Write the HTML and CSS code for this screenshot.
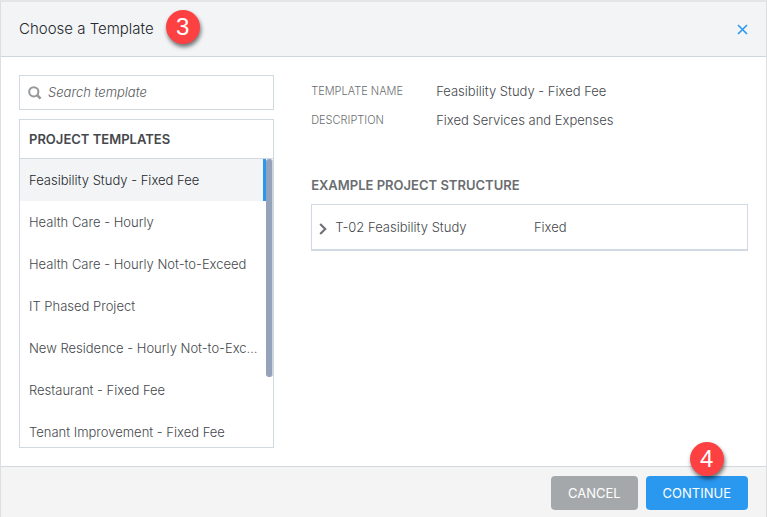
FILE: index.html
```html
<!doctype html>
<html lang="en">
	<head>
		<meta charset="utf-8"/>
		<title>Choose a Template</title>
		<link rel="stylesheet" href="styles.css">
	</head>
	<body>
		<div class="modal">
			<header class="modal-header">
				<h1>Choose a Template</h1>
				<span class="step">3</span>
				<button class="close" type="button" aria-label="Close">
					<svg width="11" height="11" viewBox="0 0 11 11"><path d="M1 1L10 10M10 1L1 10" fill="none" stroke="#2b98f0" stroke-width="1.6"/></svg>
				</button>
			</header>

			<main class="modal-body">
				<!-- left: search + list -->
				<section class="left">
					<label class="search">
						<svg width="14" height="14" viewBox="0 0 14 14"><circle cx="5.8" cy="5.8" r="4.6" fill="none" stroke="#96999c" stroke-width="2"/><path d="M9.2 9.2L12.6 12.6" stroke="#96999c" stroke-width="2.6"/></svg>
						<input type="text" placeholder="Search template" aria-label="Search template">
					</label>
					<div class="templates">
						<h2>PROJECT TEMPLATES</h2>
						<div class="list">
							<ul>
								<li class="active"><a href="#">Feasibility Study - Fixed Fee</a></li>
								<li><a href="#">Health Care - Hourly</a></li>
								<li><a href="#">Health Care - Hourly Not-to-Exceed</a></li>
								<li><a href="#">IT Phased Project</a></li>
								<li><a href="#">New Residence - Hourly Not-to-Exceed</a></li>
								<li><a href="#">Restaurant - Fixed Fee</a></li>
								<li><a href="#">Tenant Improvement - Fixed Fee</a></li>
							</ul>
							<div class="scroll"></div>
						</div>
					</div>
				</section>

				<!-- right: details -->
				<section class="right">
					<dl>
						<dt>TEMPLATE NAME</dt>
						<dd>Feasibility Study - Fixed Fee</dd>
						<dt>DESCRIPTION</dt>
						<dd>Fixed Services and Expenses</dd>
					</dl>
					<h2>EXAMPLE PROJECT STRUCTURE</h2>
					<table>
						<tr>
							<td class="name">
								<button class="expand" type="button" aria-label="Expand">
									<svg width="8" height="12" viewBox="0 0 8 12"><path d="M1.2 1L6.2 6L1.2 11" fill="none" stroke="#6f7276" stroke-width="2.2"/></svg>
								</button>T-02 Feasibility Study
							</td>
							<td>Fixed</td>
						</tr>
					</table>
				</section>
			</main>

			<footer class="modal-footer">
				<button class="btn" type="button">CANCEL</button>
				<div class="continue">
					<button class="btn btn-primary" type="button">CONTINUE</button>
					<span class="step">4</span>
				</div>
			</footer>
		</div>
	</body>
</html>
```

FILE: styles.css
```css
*{box-sizing:border-box;}
html,body{height:100%;margin:0;padding:0;}
body{background:#fff;color:#45484c;font:300 13px/20px Inter,"Liberation Sans",sans-serif;overflow:hidden;}
h1,h2,ul,dl,dd{margin:0;padding:0;}
button,input{font:inherit;}
svg{display:block;}
.modal{display:flex;flex-direction:column;min-height:100%;border:1px solid #dcdee0;border-top:2px solid #e3e5e7;border-bottom:0;}

/* header */
.modal-header{display:flex;align-items:center;height:55px;padding:0 18px;background:#f2f4f6;border-bottom:1px solid #ced7e0;}
.modal-header h1{font-size:15px;font-weight:300;color:#25282c;}
.modal-header .step{margin:0 auto 4px 12px;}
.close{padding:0;border:0;background:none;cursor:pointer;}
.step{width:34px;height:34px;border-radius:50%;background:#fd4142;color:#fff;font:400 24px/34px "Liberation Sans",Arial,sans-serif;text-align:center;box-shadow:1px 3px 4px rgba(0,0,0,.55);}

/* body */
.modal-body{display:flex;flex:1;gap:37px;padding:18px;}
.left{flex:0 0 35%;min-width:0;}
.search{display:flex;align-items:center;gap:6px;height:35px;padding:0 8px;border:1px solid #d0d9e0;}
.search input{flex:1;min-width:0;padding:0 0 2px;border:0;outline:0;background:none;}
.search input::placeholder{color:#55585c;font-style:italic;opacity:1;}
.templates{margin-top:9px;border:1px solid #d0d9e0;}
.templates h2{height:39px;padding-left:9px;border-bottom:1px solid #d0d9e0;font-size:13px;font-weight:600;line-height:38px;color:#45484c;}
.list{display:flex;height:288px;overflow:hidden;}
.list ul{flex:1;min-width:0;list-style:none;}
.list a{display:block;height:42px;padding:0 5px 0 9px;overflow:hidden;color:#45484c;line-height:42px;text-decoration:none;text-overflow:ellipsis;white-space:nowrap;}
.list .active a{border-right:3px solid #2b98f0;background:#f2f4f6;color:#25282c;}
.scroll{width:7px;height:218px;border-right:1px solid #ccd4de;border-radius:3px;background:#94a3bb;}

/* details */
.right{flex:1;min-width:0;padding-top:6px;}
.right dl{display:grid;grid-template-columns:125px 1fr;row-gap:9px;}
.right dt{font-size:11px;color:#6a6d71;}
.right h2{margin:45px 0 9px;font-size:13px;font-weight:600;color:#6a6d71;}
.right table{width:100%;border:1px solid #d0d9e4;border-bottom-width:2px;border-spacing:0;table-layout:fixed;}
.right td{height:44px;padding:0;}
.right .name{width:51%;padding-left:7px;}
.expand{display:inline-block;margin-right:8px;padding:0;border:0;background:none;vertical-align:-3px;cursor:pointer;}

/* footer */
.modal-footer{display:flex;justify-content:flex-end;gap:8px;height:51px;padding:9px 18px 0;background:#f4f4f5;border-top:1px solid #d4d8e0;}
.btn{height:34px;padding:0 17px;border:0;border-radius:4px;background:#a5a8ab;color:#fff;font-weight:400;cursor:pointer;}
.btn-primary{background:#2b98f0;}
.continue{position:relative;}
.continue .step{position:absolute;top:-34px;left:44px;}
```
